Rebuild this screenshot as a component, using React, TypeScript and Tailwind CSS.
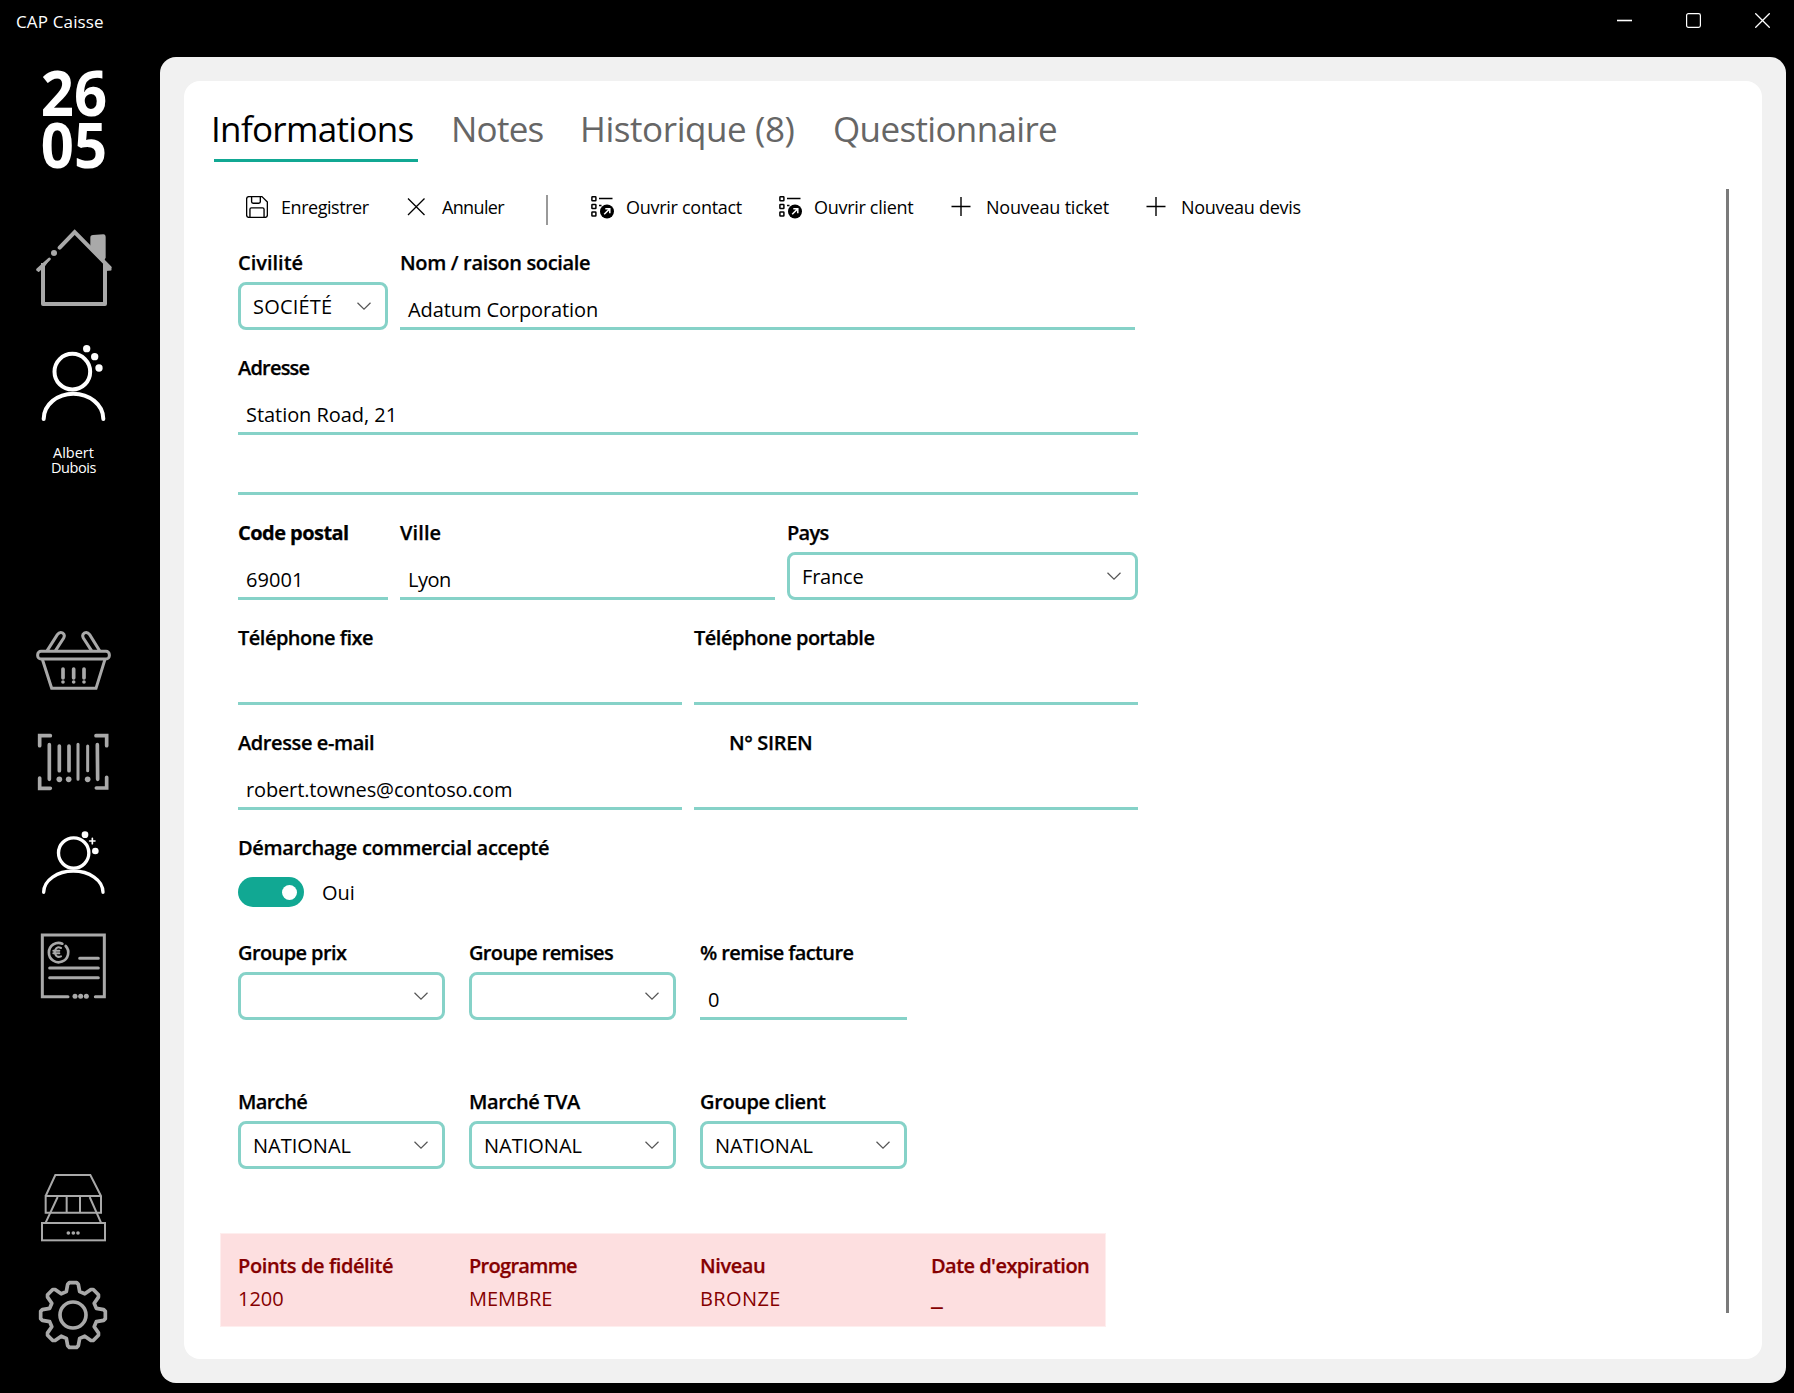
import React from "react";
import clsx from "clsx";

type IconProps = { className?: string };

function HomeIcon({ className }: IconProps) {
  return (
    <svg viewBox="0 0 240 246" className={className} fill="none" stroke="currentColor" strokeWidth="12" strokeLinecap="round" strokeLinejoin="round">
      <path d="M14 128L49 96" strokeWidth="9" />
      <path d="M14 129L46 100L37 113L17 133Z" fill="currentColor" strokeWidth="4" />
      <circle cx="63" cy="78" r="9" fill="currentColor" stroke="none" />
      <path d="M80 62L125 15L230 122" strokeLinejoin="miter" />
      <path d="M219 112L235 129L222 130Z" fill="currentColor" strokeWidth="3" />
      <path d="M172 60V32Q172 24 180 24L211 22Q218 22 218 31V92L214 100Z" fill="currentColor" stroke="none" />
      <path d="M30 108V231H216V108" strokeLinecap="butt" strokeLinejoin="round" />
    </svg>
  );
}

function UserDotsIcon({ className }: IconProps) {
  return (
    <svg viewBox="0 0 240 240" className={className} fill="none" stroke="currentColor" strokeWidth="12" strokeLinecap="round">
      <circle cx="118" cy="86" r="53.5" />
      <path d="M32 228C32 184 74 152 121 152S211 184 211 228" />
      <g fill="currentColor" stroke="none">
        <circle cx="161" cy="17" r="11" />
        <circle cx="185" cy="41" r="11" />
        <circle cx="198" cy="75" r="11" />
      </g>
    </svg>
  );
}

function BasketIcon({ className }: IconProps) {
  return (
    <svg viewBox="0 0 240 186" className={className} fill="none" stroke="currentColor" strokeWidth="9" strokeLinecap="round">
      <path d="M43 61L73 14Q80 4 89 9Q97 14 92 24L68 61" />
      <path d="M199 61L170 14Q163 4 154 9Q146 14 151 24L175 61" />
      <rect x="14" y="64" width="215" height="23" rx="10" />
      <path d="M29 91L56 175H189L215 91" />
      <path d="M90 117V144M122 117V144M153 117V144" strokeWidth="11" />
      <g fill="currentColor" stroke="none">
        <circle cx="90" cy="156" r="5.5" />
        <circle cx="122" cy="156" r="5.5" />
        <circle cx="153" cy="156" r="5.5" />
      </g>
    </svg>
  );
}

function BarcodeIcon({ className }: IconProps) {
  return (
    <svg viewBox="0 0 240 174" className={className} fill="none" stroke="currentColor" strokeWidth="11" strokeLinecap="round">
      <path d="M52 8H20V38M189 8H221V38M20 135V166H52M190 165H221V133" />
      <path d="M49 35V139M193 35L194 139" />
      <path d="M79 39V113M108 39V113" />
      <path d="M135 34V139M164 39V113" strokeWidth="9" />
      <g fill="currentColor" stroke="none">
        <circle cx="79" cy="139" r="8.5" />
        <circle cx="107" cy="139" r="8.5" />
        <circle cx="164" cy="139" r="8.5" />
      </g>
    </svg>
  );
}

function UserPlusIcon({ className }: IconProps) {
  return (
    <svg viewBox="0 0 240 198" className={className} fill="none" stroke="currentColor" strokeWidth="10" strokeLinecap="round">
      <circle cx="122" cy="69" r="45.5" />
      <path d="M32 187C32 150 74 123 121 123S210 150 210 187" />
      <path d="M178 25V41M170 33H186" strokeWidth="5" />
      <circle cx="156" cy="14" r="10" fill="currentColor" stroke="none" />
      <circle cx="187" cy="63" r="10" fill="currentColor" stroke="none" />
    </svg>
  );
}

function InvoiceIcon({ className }: IconProps) {
  return (
    <svg viewBox="0 0 240 204" className={className} fill="none" stroke="currentColor" strokeWidth="9" strokeLinecap="round">
      <path d="M105 194H28V9H214V194H187" />
      <path d="M88 35A29 29 0 1 0 98 42" strokeWidth="8" />
      <path d="M84 48Q72 42 67 53Q64 60 67 67Q72 78 84 73M61 56H79M61 64H79" strokeWidth="6" />
      <path d="M140 79H196M50 108H196M50 137H196" />
      <g fill="currentColor" stroke="none">
        <circle cx="126" cy="193" r="7.5" />
        <circle cx="143" cy="193" r="7.5" />
        <circle cx="160" cy="193" r="7.5" />
      </g>
    </svg>
  );
}

function DrawerIcon({ className }: IconProps) {
  return (
    <svg viewBox="0 0 240 210" className={className} fill="none" stroke="currentColor" strokeWidth="6">
      <path d="M38 69L67 6H172L204 69V119H38V69H204" />
      <path d="M101 69V119M141 69V119" />
      <path d="M74 72L38 149M170 72L204 149" />
      <rect x="27" y="150" width="189" height="52" />
      <g fill="currentColor" stroke="none">
        <circle cx="106" cy="180" r="5.5" />
        <circle cx="121" cy="180" r="5.5" />
        <circle cx="135" cy="180" r="5.5" />
      </g>
    </svg>
  );
}

// one tooth, repeated every 45 degrees around the hub
const tooth = [[-20, -70], [-16, -92], [-11, -97], [11, -97], [16, -92], [20, -70]];
const gearPath =
  "M" +
  [0, 1, 2, 3, 4, 5, 6, 7]
    .flatMap((k) => {
      const a = (k * Math.PI) / 4;
      return tooth.map(([x, y]) => `${(120 + x * Math.cos(a) - y * Math.sin(a)).toFixed(1)} ${(105 + x * Math.sin(a) + y * Math.cos(a)).toFixed(1)}`);
    })
    .join("L") +
  "Z";

function GearIcon({ className }: IconProps) {
  return (
    <svg viewBox="0 0 240 210" className={className} fill="none" stroke="currentColor" strokeWidth="11" strokeLinejoin="round">
      <path d={gearPath} />
      <circle cx="120" cy="105" r="39" />
    </svg>
  );
}

function SaveIcon() {
  return (
    <svg viewBox="0.4 0.4 21.2 21.2" className="h-[22px] w-[22px]" fill="none" stroke="currentColor" strokeWidth="1.3" strokeLinejoin="round">
      <path d="M3.2 1H15.8L21 6.2V18.8Q21 21 18.8 21H3.2Q1 21 1 18.8V3.2Q1 1 3.2 1Z" />
      <path d="M5.8 1V6Q5.8 7.4 7.2 7.4H12.8Q14.2 7.4 14.2 6V1" />
      <path d="M4.2 21V13.2Q4.2 11.8 5.6 11.8H16.4Q17.8 11.8 17.8 13.2V21" />
    </svg>
  );
}

function CancelIcon() {
  return (
    <svg viewBox="0 0 22 22" className="h-[22px] w-[22px]" stroke="currentColor" strokeWidth="1.3">
      <path d="M1 2.5L17.5 19M17.5 2.5L1 19" />
    </svg>
  );
}

function OpenListIcon() {
  return (
    <svg viewBox="0 0 24 24" className="h-[24px] w-[24px]" fill="none" stroke="currentColor" strokeWidth="1.5">
      <rect x="0.9" y="1.8" width="4" height="4" rx="0.6" />
      <rect x="0.9" y="9.5" width="4" height="4" rx="0.6" />
      <rect x="0.9" y="17" width="4" height="4" rx="0.6" />
      <path d="M8 3.5H21.5M8 10.5H10.5" strokeWidth="1.4" />
      <circle cx="16" cy="16.5" r="7" fill="currentColor" stroke="none" />
      <path d="M13.2 19.3L18.4 14.1M14.3 13.8H18.8V18.3" stroke="white" strokeWidth="1.5" />
    </svg>
  );
}

function PlusIcon() {
  return (
    <svg viewBox="0 0 22 22" className="h-[22px] w-[22px]" stroke="currentColor" strokeWidth="1.4">
      <path d="M0.5 10.5H19.5M10 1V20" />
    </svg>
  );
}

function Chevron() {
  return (
    <svg viewBox="0 0 14 8" className="h-[8px] w-[14px]" fill="none" stroke="#555555" strokeWidth="1.2">
      <path d="M0.5 0.7L7 7.1L13.5 0.7" />
    </svg>
  );
}

type FieldProps = {
  label: string;
  value?: string;
  width: string;
  labelClass?: string;
  valueClass?: string;
};

const labelBase = "text-[20px] leading-[32px] font-semibold whitespace-nowrap [-webkit-text-stroke:0.25px_currentColor]";

function Field({ label, value, width, labelClass, valueClass }: FieldProps) {
  return (
    <div className={clsx("shrink-0", width)}>
      <div className={clsx(labelBase, labelClass)}>{label}</div>
      <div className="mt-[3px] h-[48px] border-b-3 border-[#86d2c8] pt-[11px] pl-[8px]">
        <div className={clsx("text-[20px] leading-[34px] whitespace-nowrap", valueClass)}>{value}</div>
      </div>
    </div>
  );
}

function Select({ label, value, width, labelClass, valueClass }: FieldProps) {
  return (
    <div className={clsx("shrink-0", width)}>
      <div className={clsx(labelBase, labelClass)}>{label}</div>
      <div className="mt-[3px] flex h-[48px] items-center justify-between rounded-[8px] border-3 border-[#86d2c8] pr-[14px] pl-[12px]">
        <div className={clsx("pt-[2px] text-[20px] leading-[30px] whitespace-nowrap", valueClass)}>{value}</div>
        <Chevron />
      </div>
    </div>
  );
}

function TitleBar() {
  return (
    <div className="flex h-[57px] justify-between pr-[24px] pl-[16px] text-white">
      <div className="pt-[7px] text-[17px] leading-[30px] tracking-[0.15px]">CAP Caisse</div>
      <div className="flex gap-[54px] pt-[13px]">
        <svg viewBox="0 0 15 15" className="h-[15px] w-[15px]" stroke="currentColor">
          <path d="M0 7.5H15" strokeWidth="1.6" />
        </svg>
        <svg viewBox="0 0 15 15" className="h-[15px] w-[15px]" fill="none" stroke="currentColor">
          <rect x="0.6" y="0.6" width="13.8" height="13.8" rx="1.8" strokeWidth="1.2" />
        </svg>
        <svg viewBox="0 0 15 15" className="h-[15px] w-[15px]" stroke="currentColor">
          <path d="M0.3 0.3L14.7 14.7M14.7 0.3L0.3 14.7" strokeWidth="1.3" />
        </svg>
      </div>
    </div>
  );
}

function Sidebar() {
  return (
    <div className="w-[160px] shrink-0 pt-[9px] pl-[33px] text-[#a9a9a9]">
      <div className="w-[82px] scale-x-92 text-center text-[63px] leading-[52px] font-bold text-white">
        <div>26</div>
        <div>05</div>
      </div>
      <HomeIcon className="mt-[57px] h-[82px] w-[80px]" />
      <UserDotsIcon className="mt-[34px] h-[80px] w-[80px] text-white" />
      <div className="mt-[22px] w-[81px] text-center text-[14.5px] leading-[15px] text-white">
        <div>Albert</div>
        <div className="tracking-[-0.4px]">Dubois</div>
      </div>
      <BasketIcon className="mt-[155px] h-[62px] w-[80px]" />
      <BarcodeIcon className="mt-[41px] h-[58px] w-[80px]" />
      <UserPlusIcon className="mt-[39px] h-[66px] w-[80px] text-white" />
      <InvoiceIcon className="mt-[36px] h-[68px] w-[80px]" />
      <DrawerIcon className="mt-[173px] h-[70px] w-[80px]" />
      <GearIcon className="mt-[37px] h-[70px] w-[80px]" />
    </div>
  );
}

function Tabs() {
  return (
    <div className="flex h-[60px] pl-[30px] text-[35px] leading-[54px] whitespace-nowrap text-[#666666]">
      <div className="mr-[33px] w-[204px] border-b-3 border-[#11a893] text-black">
        <div className="-ml-[3px] tracking-[-0.68px]">Informations</div>
      </div>
      <div className="w-[129px] tracking-[-0.75px]">Notes</div>
      <div className="w-[253px] tracking-[-0.42px]">Historique (8)</div>
      <div className="tracking-[-0.65px]">Questionnaire</div>
    </div>
  );
}

type ActionProps = { icon: React.ReactNode; label: string; className: string };

function Action({ icon, label, className }: ActionProps) {
  return (
    <div className={clsx("flex shrink-0 items-center", className)}>
      <div className="w-[35px]">{icon}</div>
      {label}
    </div>
  );
}

function Toolbar() {
  return (
    <div className="flex h-[34px] items-center text-[18px] leading-[34px] whitespace-nowrap">
      <Action icon={<SaveIcon />} label="Enregistrer" className="w-[161px] tracking-[-0.45px]" />
      <Action icon={<CancelIcon />} label="Annuler" className="w-[139px] tracking-[-0.65px]" />
      <div className="mt-[6px] mr-[43px] h-[30px] w-[2px] bg-[#999999]" />
      <Action icon={<OpenListIcon />} label="Ouvrir contact" className="w-[188px] tracking-[-0.28px]" />
      <Action icon={<OpenListIcon />} label="Ouvrir client" className="w-[172px] tracking-[-0.3px]" />
      <Action icon={<PlusIcon />} label="Nouveau ticket" className="w-[195px] tracking-[-0.2px]" />
      <Action icon={<PlusIcon />} label="Nouveau devis" className="tracking-[-0.28px]" />
    </div>
  );
}

type LoyaltyProps = { label: string; value: string; className?: string; valueClass?: string };

function Loyalty({ label, value, className, valueClass = "text-[20px] leading-[30px]" }: LoyaltyProps) {
  return (
    <div className="w-[231px] shrink-0">
      <div className={clsx(labelBase, className)}>{label}</div>
      <div className={clsx("mt-[2px]", valueClass)}>{value}</div>
    </div>
  );
}

function CustomerForm() {
  return (
    <div className="mt-[23px] flex flex-col gap-[22px] pl-[54px]">
      <div className="flex gap-[12px]">
        <Select label="Civilité" value="SOCIÉTÉ" width="w-[150px]" valueClass="tracking-[0.2px]" />
        <Field label="Nom / raison sociale" value="Adatum Corporation" width="w-[735px]" labelClass="tracking-[-0.34px]" valueClass="tracking-[-0.1px]" />
      </div>
      <div className="w-[900px]">
        <Field label="Adresse" value="Station Road, 21" width="w-full" labelClass="tracking-[-0.8px]" valueClass="tracking-[-0.05px]" />
        <div className="h-[60px] border-b-3 border-[#86d2c8]" />
      </div>
      <div className="flex gap-[12px]">
        <Field label="Code postal" value="69001" width="w-[150px]" labelClass="font-bold! tracking-[-0.55px]" valueClass="tracking-[0.05px]" />
        <Field label="Ville" value="Lyon" width="w-[375px]" labelClass="tracking-[0.1px]" valueClass="tracking-[-0.5px]" />
        <Select label="Pays" value="France" width="w-[351px]" labelClass="tracking-[-0.7px]" valueClass="tracking-[-0.19px]" />
      </div>
      <div className="flex gap-[12px]">
        <Field label="Téléphone fixe" width="w-[444px]" labelClass="tracking-[-0.5px]" />
        <Field label="Téléphone portable" width="w-[444px]" labelClass="tracking-[-0.48px]" />
      </div>
      <div className="flex gap-[12px]">
        <Field label="Adresse e-mail" value="robert.townes@contoso.com" width="w-[444px]" labelClass="tracking-[-0.4px]" valueClass="tracking-[-0.14px]" />
        <Field label="N° SIREN" width="w-[444px]" labelClass="pl-[35px] tracking-[-0.35px]" />
      </div>
      <div className="h-[83px]">
        <div className={clsx(labelBase, "tracking-[-0.33px]")}>Démarchage commercial accepté</div>
        <div className="mt-[12px] flex items-center">
          <div className="flex h-[30px] w-[66px] items-center justify-end rounded-full bg-[#11a893] pr-[7px]">
            <div className="h-[15px] w-[15px] rounded-full bg-white" />
          </div>
          <div className="ml-[18px] pt-[2px] text-[20px] leading-[30px]">Oui</div>
        </div>
      </div>
      <div className="flex gap-[24px]">
        <Select label="Groupe prix" width="w-[207px]" labelClass="tracking-[-0.59px]" />
        <Select label="Groupe remises" width="w-[207px]" labelClass="tracking-[-0.64px]" />
        <Field label="% remise facture" value="0" width="w-[207px]" labelClass="tracking-[-0.62px]" />
      </div>
      <div className="mt-[44px] flex gap-[24px]">
        <Select label="Marché" value="NATIONAL" width="w-[207px]" labelClass="tracking-[-0.6px]" />
        <Select label="Marché TVA" value="NATIONAL" width="w-[207px]" labelClass="tracking-[-0.42px]" />
        <Select label="Groupe client" value="NATIONAL" width="w-[207px]" labelClass="tracking-[-0.38px]" />
      </div>
      <div className="mt-[42px] -ml-[18px] flex h-[94px] w-[886px] border border-[#feeeee] bg-[#fddfe0] pt-[16px] pl-[17px] text-[#850000]">
        <Loyalty label="Points de fidélité" value="1200" className="tracking-[-0.39px]" />
        <Loyalty label="Programme" value="MEMBRE" className="tracking-[-0.7px]" />
        <Loyalty label="Niveau" value="BRONZE" className="tracking-[-0.41px]" valueClass="text-[20px] leading-[30px] tracking-[0.4px]" />
        <Loyalty label="Date d'expiration" value="_" className="tracking-[-0.54px]" valueClass="text-[27px] leading-[22px]" />
      </div>
    </div>
  );
}

function App() {
  return (
    <div className="flex h-[1393px] w-[1794px] flex-col overflow-hidden bg-black font-['Open_Sans','Noto_Sans',sans-serif] text-black">
      <TitleBar />
      <div className="flex flex-1">
        <Sidebar />
        <div className="h-[1326px] w-[1626px] rounded-[16px] bg-[#f1f1f1] p-[24px]">
          <div className="h-[1278px] rounded-[16px] bg-white pt-[21px]">
            <Tabs />
            <div className="mt-[27px] flex h-[1124px] justify-between pr-[33px]">
              <div>
                <div className="pt-[1px] pl-[62px]">
                  <Toolbar />
                </div>
                <CustomerForm />
              </div>
              <div className="w-[3px] bg-[#7a7a7a]" />
            </div>
          </div>
        </div>
      </div>
    </div>
  );
}

export default App;
